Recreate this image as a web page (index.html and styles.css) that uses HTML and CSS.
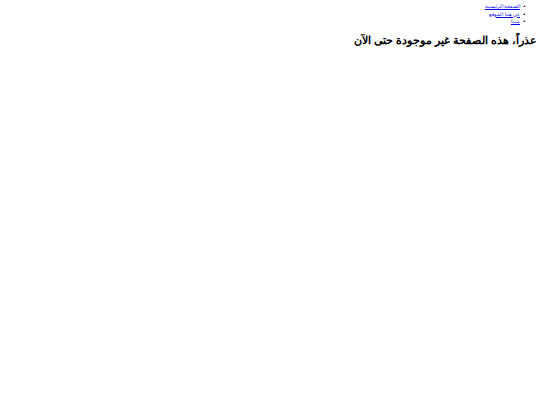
FILE: index.html
```html
<!DOCTYPE html>
<html lang="ar" dir="rtl">
<head>
<meta charset="utf-8">
<title>404</title>
<link rel="stylesheet" href="styles.css">
</head>
<body>
<ul class="nav">
<li><a href="#">الصفحة الرئيسية</a></li>
<li><a href="#">عن هذا الموقع</a></li>
<li><a href="#">ميتا</a></li>
</ul>
<h1 class="title">عذراً، هذه الصفحة غير موجودة حتى الآن</h1>
</body>
</html>
```
FILE: styles.css
```css
body {
  margin: 3px;
  font-family: "Liberation Sans", Arial, sans-serif;
  background: #fff;
  color: #000;
}
.nav {
  margin: 0;
  padding: 0 17px 0 0;
  font-size: 5.5px;
  line-height: 7.5px;
}
.nav li::marker {
  content: "\2022\00a0\00a0";
  font-size: 6px;
}
.nav a {
  font-size: 5px;
  color: #0000ee;
}
.title {
  font-size: 11px;
  line-height: 14px;
  font-weight: bold;
  margin: 7px 0 0 0;
}
```
